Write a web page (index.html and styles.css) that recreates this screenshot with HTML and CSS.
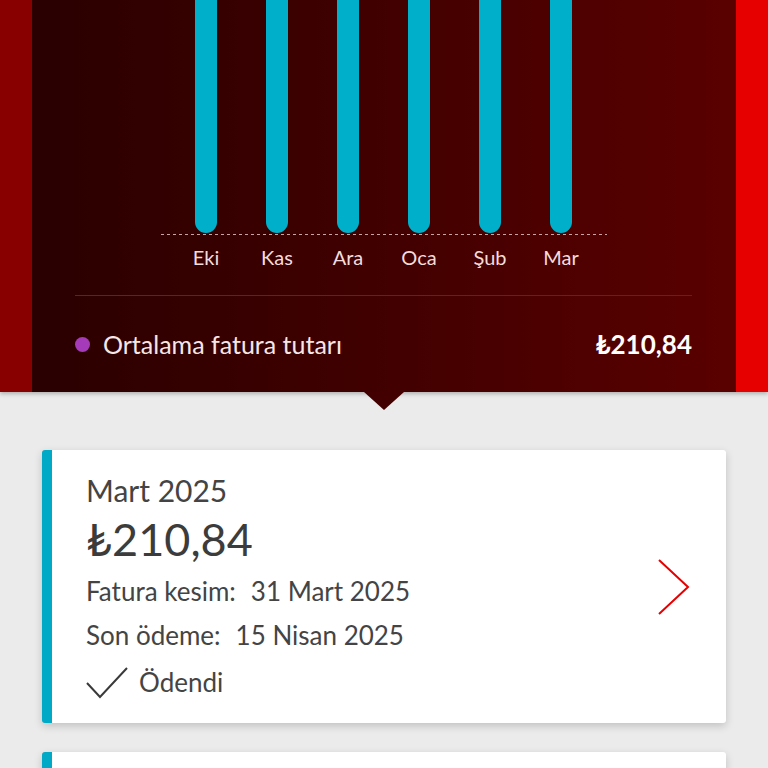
FILE: index.html
```html
<!DOCTYPE html>
<html lang="tr">
<head>
    <meta charset="UTF-8">
    <meta name="viewport" content="width=device-width, initial-scale=1.0">
    <title>Faturalarım</title>
    <link rel="stylesheet" href="styles.css">
</head>
<body>
    <div class="hero">
        <div class="strip strip-left"></div>
        <div class="panel">
            <div class="chart">
                <div class="bars">
                    <div class="bar-col"><div class="bar"></div></div>
                    <div class="bar-col"><div class="bar"></div></div>
                    <div class="bar-col"><div class="bar"></div></div>
                    <div class="bar-col"><div class="bar"></div></div>
                    <div class="bar-col"><div class="bar"></div></div>
                    <div class="bar-col"><div class="bar"></div></div>
                </div>
                <div class="baseline"></div>
                <div class="labels">
                    <span>Eki</span>
                    <span>Kas</span>
                    <span>Ara</span>
                    <span>Oca</span>
                    <span>Şub</span>
                    <span>Mar</span>
                </div>
            </div>
            <div class="divider"></div>
            <div class="avg-row">
                <div class="avg-label"><span class="dot"></span>Ortalama fatura tutarı</div>
                <div class="avg-value">₺210,84</div>
            </div>
        </div>
        <div class="strip strip-right"></div>
        <div class="notch"></div>
    </div>

    <div class="content">
        <div class="bill-card">
            <div class="bill-info">
                <div class="bill-month">Mart 2025</div>
                <div class="bill-amount">₺210,84</div>
                <div class="bill-line">Fatura kesim:<span class="bill-date">31 Mart 2025</span></div>
                <div class="bill-line">Son ödeme:<span class="bill-date">15 Nisan 2025</span></div>
                <div class="bill-status">
                    <svg class="check" width="42" height="32" viewBox="0 0 42 32">
                        <path d="M1 16 L14 30 L41 1" fill="none" stroke="#3a3a3a" stroke-width="2"/>
                    </svg>
                    Ödendi
                </div>
            </div>
            <svg class="chevron" width="34" height="58" viewBox="0 0 34 58">
                <path d="M2 2 L31 29 L2 56" fill="none" stroke="#e60000" stroke-width="2"/>
            </svg>
        </div>
        <div class="bill-card next"></div>
    </div>
</body>
</html>
```

FILE: styles.css
```css
body {
    margin: 0;
    width: 768px;
    height: 768px;
    overflow: hidden;
    font-family: 'Lato', 'Liberation Sans', sans-serif;
    background: #ebebeb;
    color: #333;
}
.hero {
    position: relative;
    display: grid;
    grid-template-columns: 32px 1fr 32px;
    height: 392px;
    box-shadow: 0 2px 4px rgba(0, 0, 0, 0.25);
    z-index: 1;
}
.strip-left {
    background: #890000;
}
.strip-right {
    background: #e60000;
}
.panel {
    background: linear-gradient(90deg, #2a0000 0%, #440000 55%, #5a0000 100%);
    padding: 0 44px 0 43px;
}
.chart {
    width: 446px;
    margin: 0 auto;
}
.bars {
    display: grid;
    grid-template-columns: repeat(6, 71px);
    padding: 0 10px;
    height: 233px;
}
.bar-col {
    display: flex;
    justify-content: center;
}
.bar {
    width: 22px;
    height: 100%;
    background: #00b0ca;
    border-radius: 0 0 11px 11px;
}
.baseline {
    height: 1px;
    margin-top: 1px;
    background: repeating-linear-gradient(90deg, #c9a3a3 0 3px, transparent 3px 6px);
}
.labels {
    display: grid;
    grid-template-columns: repeat(6, 71px);
    padding: 0 10px;
    margin-top: 9px;
    font-size: 20px;
    line-height: 26px;
    color: #f2dcdc;
    text-align: center;
}
.divider {
    height: 1px;
    margin-top: 25px;
    background: #5c2424;
}
.avg-row {
    display: flex;
    justify-content: space-between;
    align-items: center;
    height: 96px;
    font-size: 25px;
    color: #f6e6e6;
}
.avg-label {
    display: flex;
    align-items: center;
}
.dot {
    width: 15px;
    height: 15px;
    border-radius: 50%;
    background: #a53bb8;
    margin-right: 13px;
}
.avg-value {
    font-size: 26px;
    font-weight: bold;
    color: #fff;
}
.notch {
    position: absolute;
    left: 364px;
    bottom: -18px;
    width: 0;
    height: 0;
    border-left: 20px solid transparent;
    border-right: 20px solid transparent;
    border-top: 18px solid #420000;
}
.content {
    padding: 58px 42px 0;
}
.bill-card {
    display: flex;
    justify-content: space-between;
    align-items: center;
    background: #fff;
    border-left: 10px solid #00a9c6;
    border-radius: 3px;
    box-shadow: 0 3px 8px rgba(0, 0, 0, 0.18);
    height: 273px;
    box-sizing: border-box;
    padding: 4px 35px 0 34px;
}
.bill-card.next {
    margin-top: 29px;
    height: 60px;
}
.bill-month {
    font-size: 30px;
    line-height: 38px;
    color: #444;
}
.bill-amount {
    font-size: 45px;
    line-height: 60px;
    color: #3c3c3c;
}
.bill-line {
    font-size: 26px;
    line-height: 44px;
    color: #444;
}
.bill-date {
    margin-left: 15px;
}
.bill-status {
    display: flex;
    align-items: center;
    font-size: 26px;
    line-height: 50px;
    color: #444;
}
.check {
    margin-right: 11px;
    margin-top: 2px;
}
.chevron {
    margin-top: -4px;
}
```
